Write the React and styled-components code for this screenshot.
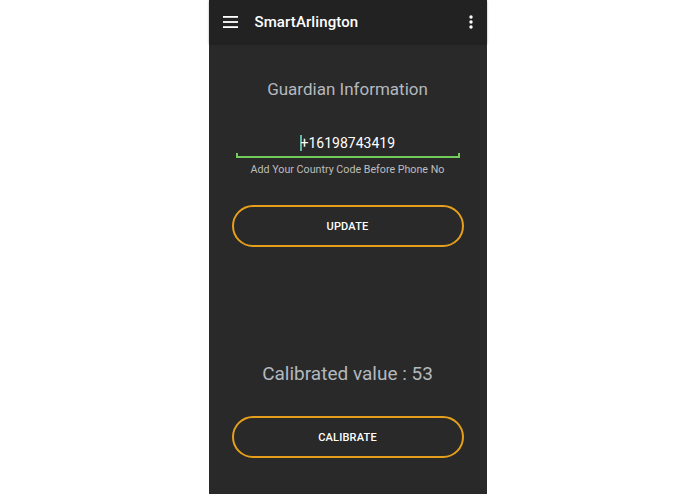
import React from "react";
import styled, { createGlobalStyle } from "styled-components";

const GlobalStyle = createGlobalStyle`
  html, body {
    margin: 0;
    padding: 0;
    background: #ffffff;
    font-family: Roboto, "Liberation Sans", sans-serif;
  }
`;

const Page = styled.div`
  display: flex;
  justify-content: center;
  width: 695px;
  height: 494px;
  overflow: hidden;
`;

const Phone = styled.div`
  width: 278px;
  height: 494px;
  background: #292929;
  display: flex;
  flex-direction: column;
`;

const Toolbar = styled.header`
  height: 43px;
  background: #222222;
  display: flex;
  align-items: center;
  padding: 0 14px;
  box-shadow: 0 1px 2px rgba(0, 0, 0, 0.35);
  color: #ffffff;
`;

const Title = styled.h1`
  flex: 1;
  margin: 0 0 0 17px;
  font-size: 15px;
  font-weight: 500;
  letter-spacing: 0.1px;
`;

const IconButton = styled.span`
  display: flex;
  align-items: center;
  justify-content: center;
`;

const Content = styled.main`
  display: flex;
  flex-direction: column;
  align-items: center;
`;

const Heading = styled.div`
  margin-top: ${(p) => p.$top}px;
  font-size: ${(p) => p.$size}px;
  line-height: ${(p) => p.$size + 4}px;
  color: #b3b8bf;
`;

const Field = styled.div`
  margin-top: 34px;
  width: 224px;
  display: flex;
  flex-direction: column;
  align-items: center;
`;

const Value = styled.div`
  font-size: 14px;
  line-height: 18px;
  color: #ffffff;
  display: flex;
  align-items: center;
`;

const Cursor = styled.span`
  width: 1.5px;
  height: 16px;
  background: #5fb8a8;
  margin-right: -1px;
`;

const Underline = styled.div`
  margin-top: 1px;
  width: 100%;
  box-sizing: border-box;
  height: 5px;
  border: 2px solid #72cc5c;
  border-top: none;
`;

const Helper = styled.div`
  margin-top: 5px;
  font-size: 10.7px;
  line-height: 14px;
  color: #bdbdbd;
`;

const Button = styled.button`
  margin-top: ${(p) => p.$top}px;
  width: 232px;
  height: 42px;
  border-radius: 21px;
  border: 2px solid #e59f1c;
  background: transparent;
  color: #ffffff;
  font-family: Roboto, "Liberation Sans", sans-serif;
  font-size: 11px;
  font-weight: 500;
  letter-spacing: 0.2px;
  text-transform: uppercase;
`;

export default function App() {
  return (
    <Page>
      <GlobalStyle />
      <Phone>
        <Toolbar>
          <IconButton>
            <svg width="15" height="12" viewBox="0 0 15 12">
              <rect x="0" y="0" width="15" height="1.8" fill="#fff" />
              <rect x="0" y="5.1" width="15" height="1.8" fill="#fff" />
              <rect x="0" y="10.2" width="15" height="1.8" fill="#fff" />
            </svg>
          </IconButton>
          <Title>SmartArlington</Title>
          <IconButton>
            <svg width="4" height="14" viewBox="0 0 4 14">
              <circle cx="2" cy="2" r="1.7" fill="#fff" />
              <circle cx="2" cy="7" r="1.7" fill="#fff" />
              <circle cx="2" cy="12" r="1.7" fill="#fff" />
            </svg>
          </IconButton>
        </Toolbar>
        <Content>
          <Heading $top={36} $size={17}>Guardian Information</Heading>
          <Field>
            <Value>
              <Cursor />
              +16198743419
            </Value>
            <Underline />
            <Helper>Add Your Country Code Before Phone No</Helper>
          </Field>
          <Button $top={28}>Update</Button>
          <Heading $top={115} $size={19}>Calibrated value : 53</Heading>
          <Button $top={31}>Calibrate</Button>
        </Content>
      </Phone>
    </Page>
  );
}
